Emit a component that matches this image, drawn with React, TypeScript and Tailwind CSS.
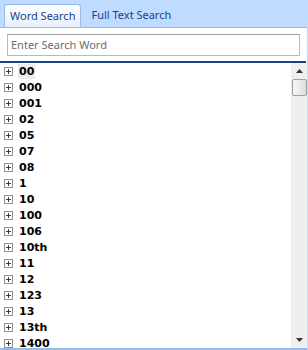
import React from 'react';

const words = ['00', '000', '001', '02', '05', '07', '08', '1', '10', '100', '106', '10th', '11', '12', '123', '13', '13th', '1400'];

function Expander() {
  return (
    <span className="w-[9px] h-[9px] border border-[#8f8f8f] bg-white flex items-center justify-center shrink-0 relative">
      <span className="absolute w-[5px] h-px bg-[#3c3c3c]" />
      <span className="absolute h-[5px] w-px bg-[#3c3c3c]" />
    </span>
  );
}

export default function App() {
  return (
    <div className="w-[308px] h-[350px] bg-[#bfdbff] flex flex-col" style={{ fontFamily: '"Noto Sans", sans-serif' }}>
      <div className="h-[27px] flex items-end pl-[4px] shrink-0">
        <div className="h-[23px] px-[5px] rounded-t-[3px] border border-b-0 border-[#99bbe8] bg-gradient-to-b from-[#ffffff] to-[#e6f0fc] text-[11px] text-[#15428b] flex items-center">
          Word Search
        </div>
        <div className="h-[23px] px-[10px] text-[11px] text-[#15428b] flex items-center">
          Full Text Search
        </div>
      </div>
      <div className="flex-1 mr-[1px] bg-white border-t border-[#99bbe8] flex flex-col min-h-0">
        <div className="px-[7px] pt-[6px] pb-[5px]">
          <div className="h-[22px] border border-[#b5b8c8] border-t-[#a0a0a0] flex items-center px-[3px] text-[11px] text-[#6d6d6d]">
            Enter Search Word
          </div>
        </div>
        <div className="h-[2px] bg-[#15428b] mr-[1px] shrink-0" />
        <div className="flex-1 flex min-h-0 overflow-hidden border-b-2 border-[#99bbe8]">
          <div className="flex-1 flex flex-col overflow-hidden">
            {words.map((w, i) => (
              <div key={w} className="h-[16px] shrink-0 flex items-center pl-[4px] gap-[5px]">
                <Expander />
                <span
                  className={`px-[1px] text-[11px] font-bold text-black leading-[15px] ${i === 0 ? 'bg-[#ececec]' : ''}`}
                  style={{ fontFamily: '"DejaVu Sans", sans-serif' }}
                >
                  {w}
                </span>
              </div>
            ))}
          </div>
          <div className="w-[16px] bg-[#efefef] flex flex-col items-center">
            <div className="h-[16px] flex items-center justify-center">
              <svg width="7" height="4" viewBox="0 0 7 4"><path d="M3.5 0 L7 4 L0 4 Z" fill="#333" /></svg>
            </div>
            <div className="w-[15px] h-[17px] border border-[#9e9e9e] rounded-[2px] bg-gradient-to-r from-[#f8f8f8] to-[#dcdcdc]" />
            <div className="flex-1" />
            <div className="h-[16px] flex items-center justify-center">
              <svg width="7" height="4" viewBox="0 0 7 4"><path d="M0 0 L7 0 L3.5 4 Z" fill="#333" /></svg>
            </div>
          </div>
        </div>
      </div>
    </div>
  );
}
